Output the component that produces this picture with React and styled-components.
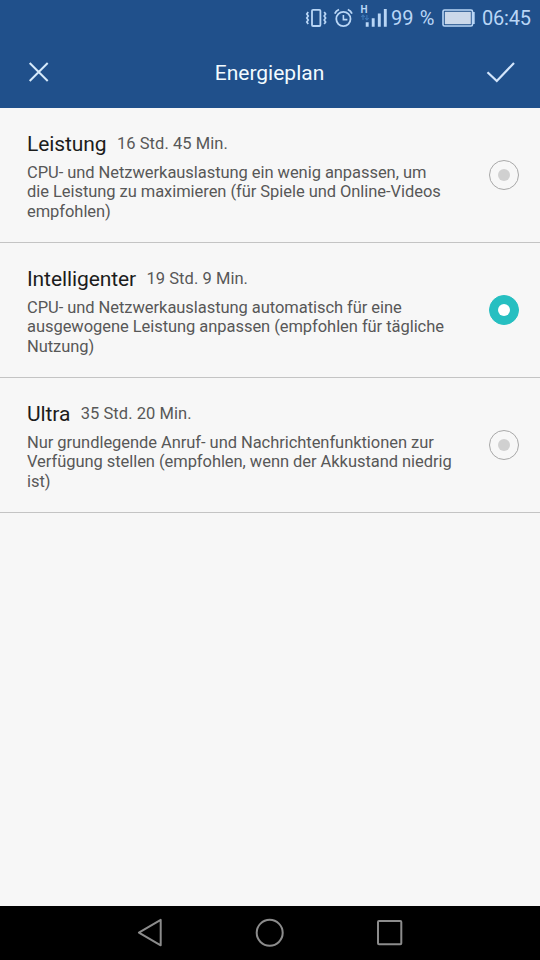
import React, { useState } from "react";
import styled, { createGlobalStyle } from "styled-components";

const plans = [
  {
    id: "performance",
    name: "Leistung",
    duration: "16 Std. 45 Min.",
    lines: [
      "CPU- und Netzwerkauslastung ein wenig anpassen, um",
      "die Leistung zu maximieren (für Spiele und Online-Videos",
      "empfohlen)",
    ],
  },
  {
    id: "smart",
    name: "Intelligenter",
    duration: "19 Std. 9 Min.",
    lines: [
      "CPU- und Netzwerkauslastung automatisch für eine",
      "ausgewogene Leistung anpassen (empfohlen für tägliche",
      "Nutzung)",
    ],
  },
  {
    id: "ultra",
    name: "Ultra",
    duration: "35 Std. 20 Min.",
    lines: [
      "Nur grundlegende Anruf- und Nachrichtenfunktionen zur",
      "Verfügung stellen (empfohlen, wenn der Akkustand niedrig",
      "ist)",
    ],
  },
];

const StatusIcons = () => (
  <>
    <VibrateIcon viewBox="0 0 22 20">
      <rect x="7" y="1.8" width="8.4" height="16.2" rx="1" strokeWidth="1.8" />
      <path d="M3.2 4l-1.4 2 1.4 2-1.4 2 1.4 2-1.4 2 1.4 2M19.2 4l1.4 2-1.4 2 1.4 2-1.4 2 1.4 2-1.4 2" strokeWidth="1.7" />
    </VibrateIcon>
    <AlarmIcon viewBox="0 0 20 20">
      <circle cx="9.4" cy="11" r="7.1" strokeWidth="1.8" />
      <path d="M9.4 7v4.6h4" strokeWidth="1.6" />
      <path d="M0.8 5.6Q2 2.8 5 1.5M18 5.6Q16.8 2.8 13.8 1.5" strokeWidth="1.8" />
    </AlarmIcon>
    <Signal>
      <Network>H</Network>
      <SignalIcon viewBox="0 0 28 22">
        <path d="M3 13V8M1.2 10L3 8l1.8 2M6.9 8v5M5.1 11l1.8 2 1.8-2" stroke="#3e78b8" strokeWidth="1.1" />
        <path d="M7.2 19.8v-4.6M13.2 19.8v-8.6M19.3 19.8V6.4M25.3 19.8V2" strokeWidth="2.9" />
      </SignalIcon>
    </Signal>
  </>
);

const App = () => {
  const [selected, setSelected] = useState("smart");

  const planList = plans.map((plan) => (
    <PlanRow key={plan.id} onClick={() => setSelected(plan.id)}>
      <PlanText>
        <PlanHeading>
          <PlanName>{plan.name}</PlanName>
          <Duration>{plan.duration}</Duration>
        </PlanHeading>
        <Description>{plan.lines.join("\n")}</Description>
      </PlanText>
      <Radio $checked={plan.id === selected} />
    </PlanRow>
  ));

  return (
    <Screen>
      <GlobalStyle />
      <Header>
        <StatusBar>
          <StatusIcons />
          <Percent>99 %</Percent>
          <BatteryIcon viewBox="0 0 34 18">
            <rect x="1" y="1" width="29.5" height="16" rx="1.5" strokeWidth="1.6" />
            <rect x="2.8" y="2.8" width="26" height="12.4" fill="#ccd9ea" stroke="none" />
            <path d="M31.5 3v12" strokeWidth="2.4" />
          </BatteryIcon>
          <Clock>06:45</Clock>
        </StatusBar>
        <TitleBar>
          <CloseIcon viewBox="0 0 20 20">
            <path d="M1.7 1l18 18M19.7 1l-18 18" />
          </CloseIcon>
          <Title>Energieplan</Title>
          <CheckIcon viewBox="0 0 30 22">
            <path d="M1.5 11.2L10.8 20 28 2" />
          </CheckIcon>
        </TitleBar>
      </Header>

      <PlanList>{planList}</PlanList>

      <NavBar>
        <NavIcon viewBox="0 0 28 28">
          <path d="M2.9 13.6L24.7 0.9v25.4z" />
        </NavIcon>
        <NavIcon viewBox="0 0 28 28">
          <circle cx="13.7" cy="13.8" r="13" />
        </NavIcon>
        <NavIcon viewBox="0 0 28 28">
          <rect x="2" y="2" width="23.3" height="23.3" rx="1" />
        </NavIcon>
      </NavBar>
    </Screen>
  );
};

export default App;

const GlobalStyle = createGlobalStyle`
  body {
    background: #f7f7f7;
    font-family: Roboto, sans-serif;
    margin: 0;
  }
`;

const Screen = styled.div`
  display: flex;
  flex-direction: column;
  height: 960px;
  overflow: hidden;
  width: 540px;
`;

const Header = styled.header`
  background: #20508b;
  height: 108px;
`;

const StatusBar = styled.div`
  align-items: center;
  color: #b9d6f6;
  display: flex;
  font-size: 20px;
  height: 36px;
  line-height: 36px;
  padding-left: 305px;
  white-space: nowrap;
`;

const Icon = styled.svg`
  display: block;
  fill: none;
  flex-shrink: 0;
  overflow: visible;
  stroke: #b9d6f6;
`;

const VibrateIcon = styled(Icon)`
  height: 20px;
  width: 22px;
`;

const AlarmIcon = styled(Icon)`
  height: 20px;
  margin-left: 7px;
  width: 20px;
`;

const Signal = styled.div`
  height: 22px;
  margin-left: 6px;
  position: relative;
  width: 28px;
`;

const SignalIcon = styled(Icon)`
  height: 22px;
  width: 28px;
`;

const Network = styled.span`
  font-size: 10px;
  font-weight: 700;
  left: 0.5px;
  line-height: 10px;
  position: absolute;
  top: -2px;
`;

const Percent = styled.span`
  letter-spacing: 0.1px;
  margin-left: 3px;
  width: 51px;
  word-spacing: 1px;
`;

const BatteryIcon = styled(Icon)`
  height: 18px;
  width: 34px;
`;

const Clock = styled.span`
  letter-spacing: -0.2px;
  margin-left: 6px;
`;

const TitleBar = styled.div`
  align-items: center;
  display: flex;
  height: 72px;
  justify-content: space-between;
  padding: 0 24px 0 28px;
`;

const CloseIcon = styled(Icon)`
  height: 20px;
  stroke: #d6eafb;
  stroke-width: 2;
  width: 20px;
`;

const Title = styled.h1`
  color: #f2fbff;
  font-size: 21px;
  font-weight: 400;
  margin: 2px 0 0 5px;
`;

const CheckIcon = styled(Icon)`
  height: 22px;
  stroke: #d3e5fb;
  stroke-width: 2.2;
  width: 30px;
`;

const PlanList = styled.main`
  background: #f7f7f7;
  flex: 1;
`;

const PlanRow = styled.div`
  border-bottom: 1px solid #c4c4c4;
  box-sizing: border-box;
  cursor: pointer;
  display: flex;
  height: 135px;
  justify-content: space-between;
  padding: 22px 21px 0 27px;
`;

const PlanText = styled.div`
  width: 440px;
`;

const PlanHeading = styled.div`
  align-items: center;
  display: flex;
  gap: 10.5px;
  height: 28px;
`;

const PlanName = styled.span`
  color: #1c1c1c;
  font-size: 21px;
  letter-spacing: -0.1px;
`;

const Duration = styled.span`
  color: #585858;
  font-size: 16.5px;
  letter-spacing: 0.05px;
  margin-bottom: 2px;
`;

const Description = styled.p`
  color: #585858;
  font-size: 16.5px;
  letter-spacing: -0.055px;
  line-height: 19.5px;
  margin: 4.7px 0 0;
  white-space: pre;
`;

const Radio = styled.div`
  align-items: center;
  background: ${({ $checked }) => ($checked ? "#26bfc1" : "#f7f7f7")};
  border: 1px solid ${({ $checked }) => ($checked ? "#26bfc1" : "#a8a8a8")};
  border-radius: 50%;
  box-sizing: border-box;
  display: flex;
  height: 30px;
  justify-content: center;
  margin-top: 30px;
  width: 30px;

  &::after {
    background: ${({ $checked }) => ($checked ? "#fff" : "#d0d0d0")};
    border-radius: 50%;
    content: "";
    height: 12px;
    width: 12px;
  }
`;

const NavBar = styled.nav`
  align-items: center;
  background: #000;
  display: flex;
  height: 54px;
  justify-content: space-between;
  padding: 0 136px;
`;

const NavIcon = styled(Icon)`
  height: 28px;
  stroke: #8c8c8c;
  stroke-linejoin: round;
  stroke-width: 2;
  width: 28px;
`;
